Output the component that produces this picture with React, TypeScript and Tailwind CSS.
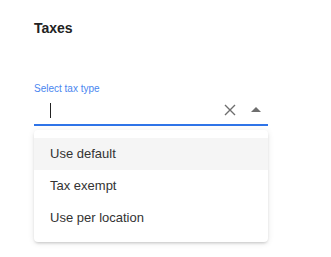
export default function App() {
	return (
		<div className="w-[331px] h-[257px] bg-white px-[34px] pt-[18px] font-['Liberation_Sans',Arial,sans-serif]">
			<h2 className="text-[14px] leading-[20px] font-bold text-[#222]">Taxes</h2>

			<div className="mt-[45px] w-[234px]">
				<label className="block text-[10px] leading-[12px] text-[#4a86f0]">Select tax type</label>

				<div className="flex items-center h-[31px] border-b-2 border-[#2f74e8]">
					<span className="ml-[16px] mt-[1px] w-[1px] h-[15px] bg-[#222]"></span>
					<div className="flex-1"></div>
					<svg width="12" height="12" viewBox="0 0 12 12" className="mr-[15px] mt-[1px]">
						<path d="M1 1 L11 11 M11 1 L1 11" stroke="#6e6e6e" strokeWidth="1.4" />
					</svg>
					<svg width="10" height="5" viewBox="0 0 10 5" className="mr-[7px] -mt-[1px]">
						<path d="M0 5 L5 0 L10 5 Z" fill="#6e6e6e" />
					</svg>
				</div>

				<ul className="mt-[4px] py-[8px] rounded-[4px] bg-white shadow-[0_2px_3px_-1px_rgba(0,0,0,0.18),0_1px_6px_0_rgba(0,0,0,0.1)] text-[13px] text-[#333]">
					<li className="flex items-center h-[32px] px-[16px] bg-[#f5f5f5]">Use default</li>
					<li className="flex items-center h-[32px] px-[16px]">Tax exempt</li>
					<li className="flex items-center h-[32px] px-[16px]">Use per location</li>
				</ul>
			</div>
		</div>
	);
}
